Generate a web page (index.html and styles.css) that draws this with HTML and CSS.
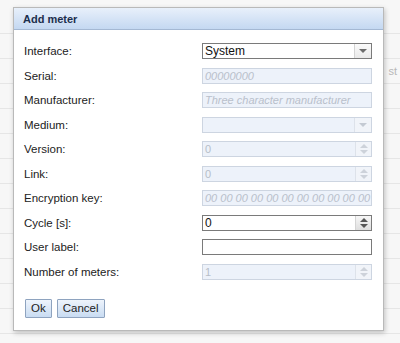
FILE: index.html
```html
<!DOCTYPE html>
<html>
<head>
<meta charset="utf-8">
<link rel="stylesheet" href="styles.css">
</head>
<body>
<div class="page">
  <div class="bg-row short"></div>
  <div class="bg-row"></div>
  <div class="bg-row"><span class="bg-text">st</span></div>
  <div class="bg-row"></div>
  <div class="bg-row"></div>
  <div class="bg-row"></div>
  <div class="bg-row"></div>
  <div class="bg-row"></div>
  <div class="bg-row"></div>
  <div class="bg-row"></div>
  <div class="bg-row"></div>
  <div class="bg-row"></div>
  <div class="bg-row"></div>
  <div class="bg-row"></div>
</div>

<div class="dialog">
  <div class="dlg-header">Add meter</div>
  <div class="dlg-body">
    <div class="form">
      <div class="lbl">Interface:</div>
      <div class="field select enabled"><span class="val">System</span><span class="drop"><span class="tri-down"></span></span></div>

      <div class="lbl">Serial:</div>
      <div class="field disabled"><span class="ph">00000000</span></div>

      <div class="lbl">Manufacturer:</div>
      <div class="field disabled"><span class="ph">Three character manufacturer</span></div>

      <div class="lbl">Medium:</div>
      <div class="field select disabled"><span class="val"></span><span class="drop"><span class="tri-down"></span></span></div>

      <div class="lbl">Version:</div>
      <div class="field spin disabled"><span class="val">0</span><span class="spinbtn"><span class="tri-up"></span><span class="tri-dn"></span></span></div>

      <div class="lbl">Link:</div>
      <div class="field spin disabled"><span class="val">0</span><span class="spinbtn"><span class="tri-up"></span><span class="tri-dn"></span></span></div>

      <div class="lbl">Encryption key:</div>
      <div class="field disabled"><span class="ph">00 00 00 00 00 00 00 00 00 00 00 00 00 00 00 00</span></div>

      <div class="lbl">Cycle [s]:</div>
      <div class="field spin enabled"><span class="val">0</span><span class="spinbtn"><span class="tri-up"></span><span class="tri-dn"></span></span></div>

      <div class="lbl">User label:</div>
      <div class="field enabled"><span class="val"></span></div>

      <div class="lbl">Number of meters:</div>
      <div class="field spin disabled"><span class="val">1</span><span class="spinbtn"><span class="tri-up"></span><span class="tri-dn"></span></span></div>
    </div>
    <div class="buttons">
      <button class="btn">Ok</button>
      <button class="btn">Cancel</button>
    </div>
  </div>
</div>
</body>
</html>
```
FILE: styles.css
```css
html, body {
  margin: 0;
  padding: 0;
}
body {
  width: 400px;
  height: 343px;
  overflow: hidden;
  background: #f5f5f5;
  font-family: "Liberation Sans", Arial, sans-serif;
  position: relative;
}
.page {
  display: flex;
  flex-direction: column;
}
.bg-row {
  height: 24px;
  border-bottom: 1px solid #e6e6e6;
  background: #f7f7f7;
  display: flex;
  justify-content: flex-end;
  align-items: center;
}
.bg-row.short {
  height: 33px;
}
.bg-text {
  font-size: 11px;
  color: #b8b8b8;
  padding-right: 3px;
}
.dialog {
  position: absolute;
  left: 13px;
  top: 7px;
  width: 369px;
  height: 322px;
  background: #fff;
  border: 1px solid #b9b9b9;
  box-shadow: 1px 2px 5px rgba(0,0,0,0.22);
  display: flex;
  flex-direction: column;
}
.dlg-header {
  height: 21px;
  line-height: 22px;
  background: linear-gradient(#e8f0fb, #c4d8f1);
  border-bottom: 1px solid #a4b8d3;
  color: #1c2f4d;
  font-weight: bold;
  font-size: 11px;
  padding-left: 9px;
}
.dlg-body {
  padding: 13px 10px 0 10px;
}
.form {
  display: grid;
  grid-template-columns: 178px 170px;
  grid-auto-rows: 16px;
  row-gap: 8.5px;
  align-items: center;
}
.lbl {
  font-size: 11.5px;
  color: #222;
  line-height: 16px;
}
.field {
  height: 16px;
  box-sizing: border-box;
  display: flex;
  align-items: stretch;
  overflow: hidden;
  font-size: 11px;
  white-space: nowrap;
}
.field .val, .field .ph {
  flex: 1;
  line-height: 14px;
  padding-left: 2px;
  overflow: hidden;
}
.field.enabled {
  background: #fff;
  border: 1px solid #7a7a7a;
  color: #111;
}
.field.select.enabled .val {
  font-size: 12px;
}
.field.spin.enabled .val {
  font-size: 12px;
}
.field.disabled {
  background: #edf2fa;
  border: 1px solid #cdd5e1;
  color: #b7bec8;
}
.ph {
  font-style: italic;
  color: #b9c0cb;
}
.drop {
  width: 16px;
  border-left: 1px solid #d4d4d4;
  background: linear-gradient(#fbfbfb, #e9e9e9);
  display: flex;
  align-items: center;
  justify-content: center;
}
.disabled .drop {
  background: #f1f4f9;
  border-left: 1px solid #dde2ea;
}
.tri-down {
  width: 0;
  height: 0;
  border-left: 4px solid transparent;
  border-right: 4px solid transparent;
  border-top: 4px solid #6c6c6c;
}
.disabled .tri-down {
  border-top-color: #c4cad3;
}
.spinbtn {
  width: 15px;
  border-left: 1px solid #d4d4d4;
  display: flex;
  flex-direction: column;
  align-items: center;
  justify-content: center;
  gap: 2px;
  background: linear-gradient(#f7f7f7, #dedede);
}
.disabled .spinbtn {
  background: #f1f4f9;
  border-left: 1px solid #dde2ea;
}
.tri-up {
  width: 0;
  height: 0;
  border-left: 4px solid transparent;
  border-right: 4px solid transparent;
  border-bottom: 4px solid #555;
}
.tri-dn {
  width: 0;
  height: 0;
  border-left: 4px solid transparent;
  border-right: 4px solid transparent;
  border-top: 4px solid #555;
}
.disabled .tri-up { border-bottom-color: #cdd2da; }
.disabled .tri-dn { border-top-color: #cdd2da; }
.buttons {
  display: flex;
  gap: 5px;
  margin-top: 19px;
  padding-left: 1px;
}
.btn {
  height: 19px;
  box-sizing: border-box;
  padding: 0 5px;
  font-family: "Liberation Sans", Arial, sans-serif;
  font-size: 11.5px;
  color: #222;
  background: linear-gradient(#eef4fc, #c9dcf2);
  border: 1px solid #8ea3bf;
  border-radius: 1px;
  line-height: 15px;
}
```
